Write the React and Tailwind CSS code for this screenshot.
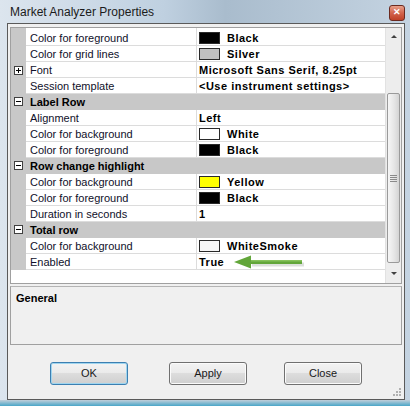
import React from 'react';

const rows = [
    { name: 'Color for foreground', value: 'Black', swatch: '#000000' },
    { name: 'Color for grid lines', value: 'Silver', swatch: '#c0c0c0' },
    { name: 'Font', value: 'Microsoft Sans Serif, 8.25pt', expand: true },
    { name: 'Session template', value: '<Use instrument settings>' },
    { category: 'Label Row' },
    { name: 'Alignment', value: 'Left' },
    { name: 'Color for background', value: 'White', swatch: '#ffffff' },
    { name: 'Color for foreground', value: 'Black', swatch: '#000000' },
    { category: 'Row change highlight' },
    { name: 'Color for background', value: 'Yellow', swatch: '#ffff00' },
    { name: 'Color for foreground', value: 'Black', swatch: '#000000' },
    { name: 'Duration in seconds', value: '1' },
    { category: 'Total row' },
    { name: 'Color for background', value: 'WhiteSmoke', swatch: '#f5f5f5' },
    { name: 'Enabled', value: 'True', arrow: true },
];

function Box({ minus }) {
    return (
        <span className="w-[9px] h-[9px] border border-[#404040] bg-white flex items-center justify-center relative">
            <span className="w-[5px] h-px bg-black" />
            {!minus && <span className="absolute w-px h-[5px] bg-black" />}
        </span>
    );
}

function GreenArrow() {
    return (
        <svg className="absolute left-[34px] top-[-1px]" width="76" height="18" viewBox="0 0 76 18">
            <path d="M20 7.5 H72 V11.5 H20 Z" fill="#9aa79a" opacity="0.35" transform="translate(1,2)" />
            <path d="M3 9 L20 2.5 L20 7 L71 7 L71 11 L20 11 L20 15.5 Z" fill="#62a63a" />
            <path d="M20 7 L71 7 L71 8.5 L20 8.5 Z" fill="#86c25c" />
        </svg>
    );
}

function Row({ row, first }) {
    const h = first ? 'h-[18px]' : 'h-[16px]';
    if (row.category) {
        return (
            <div className={`flex ${h} bg-[#c8c8c8] border-b border-[#c8c8c8]`}>
                <div className="w-[15px] flex items-center justify-center">
                    <Box minus />
                </div>
                <div className="pl-[4px] font-bold leading-[14px] flex items-end">{row.category}</div>
            </div>
        );
    }
    return (
        <div className={`flex ${h}`}>
            <div className="w-[15px] bg-[#c8c8c8] flex items-center justify-center">
                {row.expand && <Box />}
            </div>
            <div className="w-[170px] pl-[4px] border-b border-[#dcdcdc] text-[#10102a] leading-[14px] flex items-end">
                {row.name}
            </div>
            <div className="flex-1 border-l border-b border-[#dcdcdc] flex items-end pl-[2px] font-bold tracking-[0.5px] relative">
                {row.swatch && (
                    <span
                        className="w-[21px] h-[12px] border border-[#2a2a2a] mr-[7px] mb-[1px] shrink-0"
                        style={{ backgroundColor: row.swatch }}
                    />
                )}
                <span className="leading-[14px]">{row.value}</span>
                {row.arrow && <GreenArrow />}
            </div>
        </div>
    );
}

function Scrollbar() {
    return (
        <div className="w-[16px] bg-[#ededed] border-l border-[#e2e2e2] flex flex-col">
            <div className="h-[17px] flex items-center justify-center">
                <span className="w-0 h-0 border-l-[3px] border-r-[3px] border-b-[3px] border-l-transparent border-r-transparent border-b-[#404040]" />
            </div>
            <div className="h-[48px]" />
            <div className="h-[170px] mx-px rounded-[2px] border border-[#9a9a9a] bg-[linear-gradient(to_right,#f6f6f6,#e6e6e6_55%,#d4d4d4)] flex items-center justify-center">
                <div className="flex flex-col gap-[1px]">
                    <span className="w-[7px] h-px bg-[#8a8a8a]" />
                    <span className="w-[7px] h-px bg-[#8a8a8a]" />
                    <span className="w-[7px] h-px bg-[#8a8a8a]" />
                    <span className="w-[7px] h-px bg-[#8a8a8a]" />
                </div>
            </div>
            <div className="flex-1 flex items-center justify-center">
                <span className="w-0 h-0 border-l-[3px] border-r-[3px] border-t-[3px] border-l-transparent border-r-transparent border-t-[#404040]" />
            </div>
        </div>
    );
}

function Button({ label, focused, className }) {
    return (
        <button
            className={`w-[78px] h-[23px] rounded-[3px] border text-[11px] text-[#1a1a1a] bg-[linear-gradient(to_bottom,#f3f3f3,#ebebeb_45%,#dddddd_50%,#cfcfcf)] ${
                focused ? 'border-[#3c7fb1] shadow-[inset_0_0_0_1px_#9fd5ef]' : 'border-[#707070] shadow-[inset_0_0_0_1px_#fbfbfb]'
            } ${className}`}
        >
            {label}
        </button>
    );
}

export default function App() {
    return (
        <div className="w-[410px] h-[406px] flex flex-col overflow-hidden bg-[linear-gradient(to_right,#dce5ee,#bfd0e0_40%,#a9bccd_55%,#c4d3e1)] font-['Liberation_Sans',Arial,sans-serif] text-[11px] text-black">
            {/* title bar */}
            <div className="h-[23px] flex items-center shrink-0">
                <span className="pl-[10px] text-[12px] text-[#1b1b1b] flex-1">Market Analyzer Properties</span>
                <span className="w-[16px] h-[16px] mr-[5px] mt-[2px] rounded-[3px] border border-[#6b2a20] bg-[linear-gradient(to_bottom,#e8a08a,#d2634c_50%,#c04026)] text-white text-[9px] font-bold flex items-center justify-center">
                    ✕
                </span>
            </div>

            {/* client area */}
            <div className="h-[377px] ml-[7px] mr-[5px] border border-[#5a5a5a] bg-[#f0f0f0] flex flex-col relative">
                <div className="mt-[3px] ml-[2px] mr-[2px] h-[257px] border border-[#a0a0a0] flex bg-white">
                    <div className="flex-1 flex flex-col">
                        {rows.map((r, i) => (
                            <Row key={i} row={r} first={i === 0} />
                        ))}
                    </div>
                    <Scrollbar />
                </div>

                <div className="mt-[2px] ml-[2px] mr-[2px] h-[59px] border border-[#a0a0a0] border-t-[#b4b4b4] pl-[5px] pt-[3px] font-bold">
                    General
                </div>

                <div className="flex mt-[17px]">
                    <Button label="OK" focused className="ml-[42px]" />
                    <Button label="Apply" className="ml-[41px]" />
                    <Button label="Close" className="ml-[37px]" />
                </div>

                <svg className="absolute right-[2px] bottom-[2px]" width="10" height="10" viewBox="0 0 10 10">
                    <g fill="#b0b0b0">
                        <rect x="7" y="1" width="2" height="2" />
                        <rect x="4" y="4" width="2" height="2" />
                        <rect x="7" y="4" width="2" height="2" />
                        <rect x="1" y="7" width="2" height="2" />
                        <rect x="4" y="7" width="2" height="2" />
                        <rect x="7" y="7" width="2" height="2" />
                    </g>
                </svg>
            </div>

            {/* bottom frame */}
            <div className="flex-1 bg-[linear-gradient(to_bottom,#c2cfda,#4aa6c8)]" />
        </div>
    );
}
